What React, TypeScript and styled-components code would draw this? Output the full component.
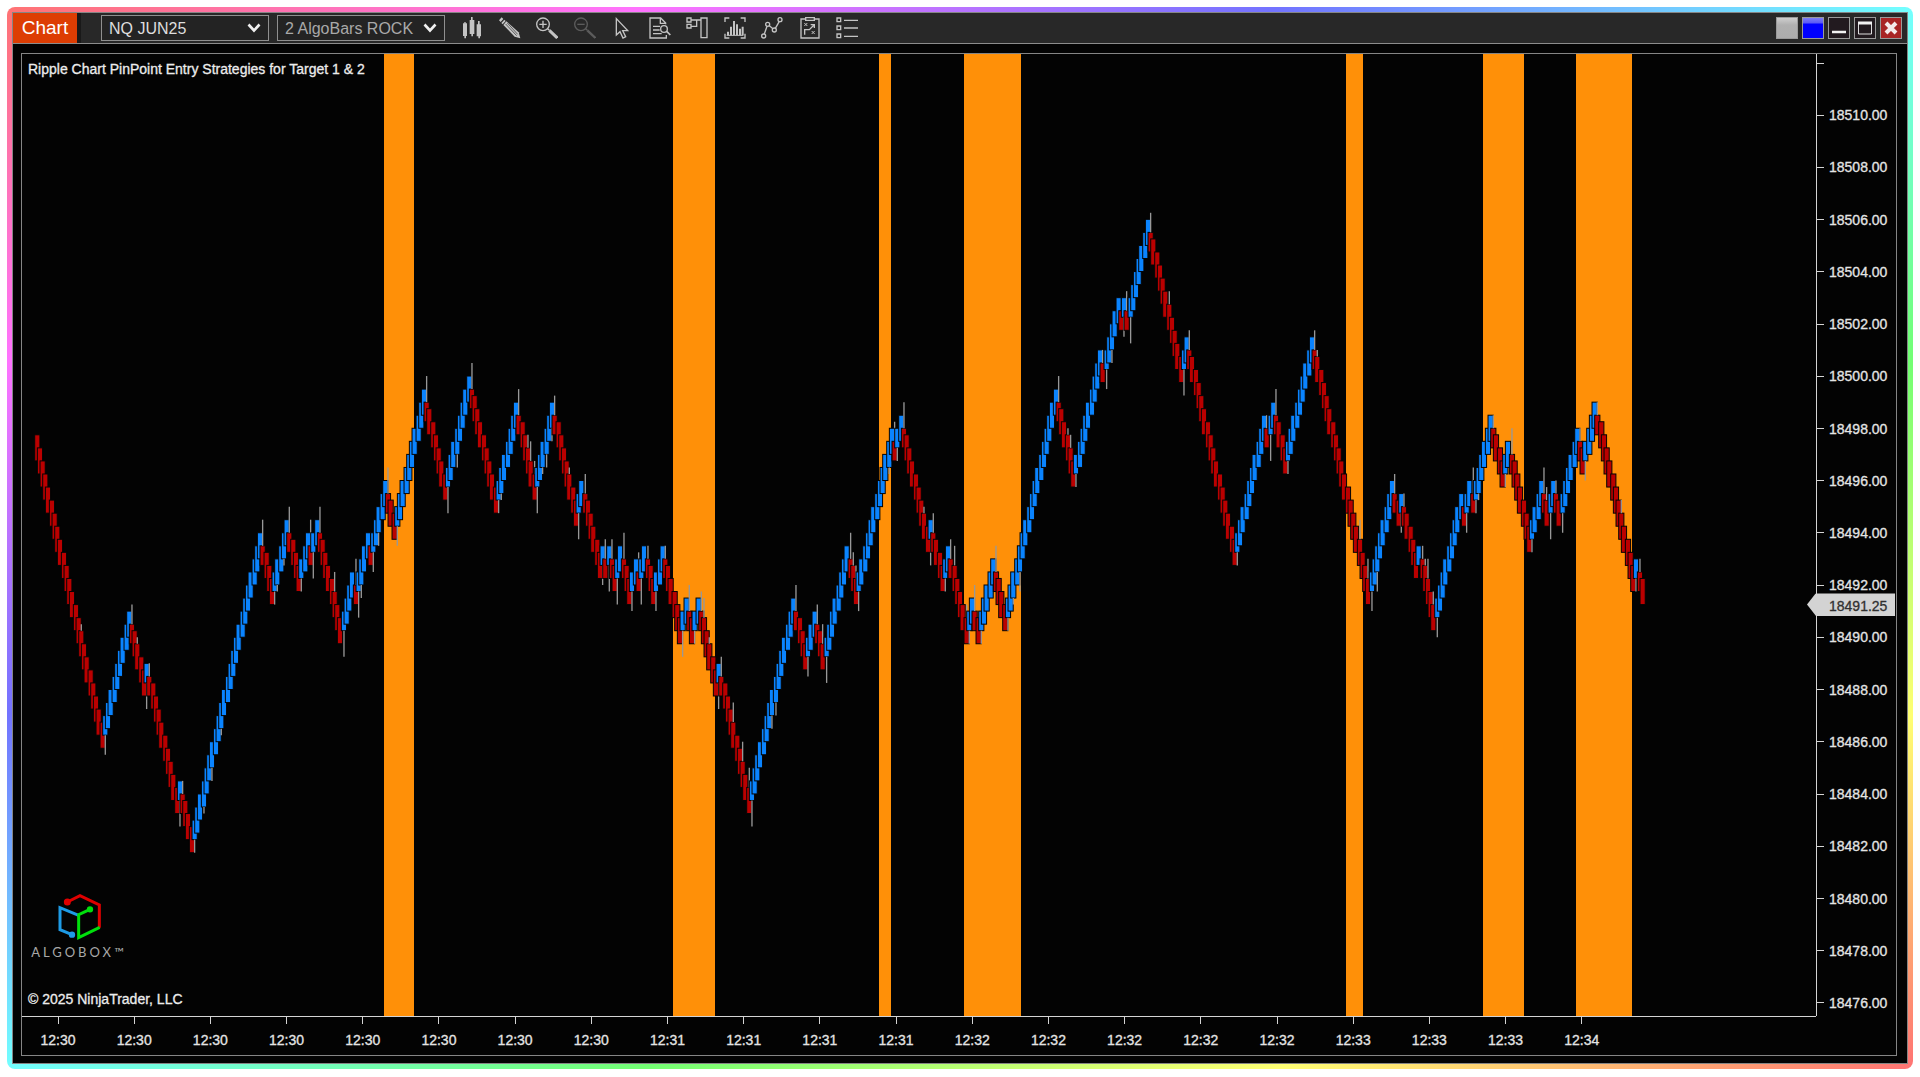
import React from "react";
import styled, { createGlobalStyle } from "styled-components";

const GlobalStyle = createGlobalStyle`
  * { box-sizing: border-box; }
  body {
    margin: 0;
    background: #fff;
    font-family: "Liberation Sans", Arial, sans-serif;
  }
`;

/* ---------- shell ---------- */

const Page = styled.div`
  height: 100vh;
  min-height: 480px;
  padding: 7px 7px 8px;
  display: flex;
`;

const GlowFrame = styled.div`
  flex: 1;
  display: flex;
  min-width: 0;
  padding: 5px;
  border-radius: 8px;
  background: linear-gradient(
    to bottom right,
    #ff7373,
    #ff73ff,
    #7373ff,
    #73ffff,
    #73ff73,
    #ffff73,
    #ff7373
  );
`;

const Window = styled.main`
  flex: 1;
  min-width: 0;
  display: flex;
  flex-direction: column;
  border: 1px solid #858585;
  background: #030303;
`;

/* ---------- title bar ---------- */

const TitleBar = styled.header`
  display: flex;
  align-items: center;
  height: 31px;
  padding-right: 5px;
  border-bottom: 1px solid #8c8c8c;
  background: #282828;
`;

const ChartTab = styled.button`
  width: 64px;
  height: 30px;
  padding: 0;
  border: 0;
  background: #dd3d03;
  color: #fff;
  font: 19px "Liberation Sans", Arial, sans-serif;
  box-shadow: 4px 0 0 #191919;
`;

const Selectors = styled.div`
  display: flex;
  gap: 8px;
  margin-left: 24px;
`;

const SelectBox = styled.label`
  display: grid;
  width: 168px;
  height: 26px;
  align-items: center;

  & > * {
    grid-area: 1 / 1;
  }

  & > svg {
    justify-self: end;
    margin-right: 8px;
    pointer-events: none;
  }
`;

const Select = styled.select<{ $tone: string }>`
  appearance: none;
  width: 100%;
  height: 26px;
  padding: 0 24px 0 7px;
  border: 1px solid #8f8f8f;
  border-radius: 0;
  background: #232323;
  color: ${(p) => p.$tone};
  font: 16px "Liberation Sans", Arial, sans-serif;
`;

const Tools = styled.nav`
  display: flex;
  justify-content: space-between;
  width: 397px;
  margin-left: 16px;
`;

const ToolButton = styled.button`
  width: 22px;
  height: 22px;
  padding: 0;
  border: 0;
  background: none;
  color: #c4c4c4;

  &:disabled {
    color: #5c5c5c;
  }

  svg {
    display: block;
  }
`;

const WindowControls = styled.div`
  display: flex;
  gap: 4px;
  margin-left: auto;
`;

const ControlButton = styled.button<{ $face: string }>`
  width: 22px;
  height: 22px;
  padding: 0;
  border: 1px solid #9a9a9a;
  background: ${(p) => p.$face};

  svg {
    display: block;
  }
`;

/* ---------- chart panel ---------- */

const PanelArea = styled.div`
  flex: 1;
  min-height: 0;
  display: flex;
  padding: 9px 10px 7px 8px;
`;

const Panel = styled.section`
  flex: 1;
  min-width: 0;
  display: grid;
  grid-template-columns: minmax(0, 1fr) 80px;
  grid-template-rows: minmax(0, 1fr) 39px;
  border: 1px solid #858585;
  -webkit-text-stroke: 0.3px currentColor;
`;

const Plot = styled.div`
  display: grid;
  min-height: 0;

  & > * {
    grid-area: 1 / 1;
    min-height: 0;
  }
`;

const Drawing = styled.svg`
  display: block;
  width: 100%;
  height: 100%;
`;

const Captions = styled.div`
  display: flex;
  flex-direction: column;
  justify-content: space-between;
  padding: 6px 6px 8px;
  color: #ececec;
  font-size: 14px;
  line-height: 18px;
`;

const Caption = styled.p`
  margin: 0;
`;

const Footer = styled.footer`
  display: flex;
  flex-direction: column;
  gap: 28px;
`;

const Brand = styled.div`
  display: flex;
  flex-direction: column;
  align-items: center;
  width: 102px;
  -webkit-text-stroke: 0;
`;

const BrandName = styled.span`
  display: flex;
  color: #a8a8a8;
  font: 13px/20px Lato, "Open Sans", sans-serif;
  letter-spacing: 3px;
  white-space: nowrap;
`;

const PriceAxis = styled.aside`
  position: relative;
  display: flex;
  flex-direction: column;
  justify-content: space-between;
  padding: 1px 0 5px;
  border-left: 1px solid #d4d4d4;
`;

const PriceRow = styled.div`
  display: flex;
  align-items: center;
  gap: 5px;
  height: 16px;
  color: #e4e4e4;
  font-size: 14px;
  line-height: 16px;

  &::before {
    content: "";
    width: 7px;
    height: 1px;
    background: #d4d4d4;
  }
`;

const PriceMarker = styled.output`
  position: absolute;
  left: -10px;
  right: 1px;
  height: 23px;
  padding-left: 22px;
  transform: translateY(-50%);
  clip-path: polygon(0 50%, 9px 0, 100% 0, 100% 100%, 9px 100%);
  background: #d3d3d3;
  color: #303030;
  font-size: 14px;
  line-height: 24px;
`;

const TimeAxis = styled.div`
  display: flex;
  justify-content: space-between;
  padding: 0 215px 0 17px;
  border-top: 1px solid #d4d4d4;
`;

const TimeLabel = styled.span`
  display: flex;
  flex-direction: column;
  align-items: center;
  gap: 7px;
  width: 38px;
  color: #e4e4e4;
  font-size: 14px;
  line-height: 18px;

  &::before {
    content: "";
    width: 1px;
    height: 7px;
    background: #d4d4d4;
  }
`;

/* ---------- icons ---------- */

const Chevron = () => (
  <svg width="14" height="12" viewBox="0 0 14 12" fill="none" stroke="#f0f0f0" strokeWidth="2.6" aria-hidden="true">
    <path d="M1.5 2.5 7 8.5l5.5-6" />
  </svg>
);

const Glyph = ({ children }: { children: React.ReactNode }) => (
  <svg width="22" height="22" viewBox="0 0 66 66" fill="none" stroke="currentColor" strokeWidth="4" aria-hidden="true">
    {children}
  </svg>
);

const tools: { label: string; disabled?: boolean; icon: React.ReactNode }[] = [
  {
    label: "Chart style",
    icon: (
      <g fill="currentColor" stroke="none">
        <path d="M6 19h4v-4h4v4h4v38h-3v7h-5v-7H6zM26 9h4V0h5v9h5v42h-4v7h-5v-7h-5zM47 22h4V12h5v10h4v36h-3v6h-5v-6h-5z" />
      </g>
    ),
  },
  {
    label: "Drawing tools",
    icon: (
      <g stroke="none" fill="currentColor">
        <path d="M8 1 0 10l5 5 8-9zM16 8 7 18l4 4 9-10z" />
        <path d="m22 13-9 11 34 35 17 5-5-18z" />
        <path d="m20 21 33 35M25 18l31 34" stroke="#282828" strokeWidth="2" />
      </g>
    ),
  },
  {
    label: "Zoom in",
    icon: (
      <>
        <circle cx="21" cy="22" r="19" />
        <path d="M21 11v22M10 22h22" />
        <path d="m35 35 5 5" />
        <path d="m40 40 24 23" strokeWidth="9" />
      </>
    ),
  },
  {
    label: "Zoom out",
    disabled: true,
    icon: (
      <>
        <circle cx="21" cy="22" r="19" />
        <path d="M10 22h22" />
        <path d="m35 35 5 5" />
        <path d="m40 40 24 23" strokeWidth="7" />
      </>
    ),
  },
  { label: "Cursor", icon: <path d="M16 5v49l11-10 9 19 8-4-9-18h15z" /> },
  {
    label: "Data box",
    icon: (
      <>
        <path d="M52 54v9H3V3h32l15 15v4M34 3v16h15" />
        <path d="M12 28h21M12 39h20M12 50h26" />
        <circle cx="45" cy="36" r="10" />
        <path d="m53 43 11 11" strokeWidth="5" />
      </>
    ),
  },
  {
    label: "Chart trader",
    icon: (
      <>
        <path d="M3 3h12v12H3zM3 22h12v11H3zM45 3h18v59H45zM16 9h28M16 28h16V10" />
      </>
    ),
  },
  {
    label: "Indicators",
    icon: (
      <>
        <path d="M3 15V3h13M50 3h13v12M3 50v13h13M50 63h13V50" />
        <path d="M12 55V44M21 55V29M30 55V12M39 55V22M48 55V35M56 55V29" strokeWidth="6" />
        <path d="M8 55h50" strokeWidth="3" />
      </>
    ),
  },
  {
    label: "Strategies",
    icon: (
      <>
        <circle cx="8" cy="57" r="6" />
        <circle cx="20" cy="22" r="6" />
        <circle cx="40" cy="39" r="6" />
        <circle cx="57" cy="8" r="6" />
        <path d="m10 51 8-23M25 26l11 9M43 34l12-21" />
      </>
    ),
  },
  {
    label: "Strategy analyzer",
    icon: (
      <>
        <path d="M20 6H6v57h54V6H46" />
        <path d="M20 2h26v8H20z" />
        <path d="M17 53V38h14l14-14M35 23h11v10" />
        <path d="m16 18 9 9m0-9-9 9M38 42l9 9m0-9-9 9" strokeWidth="3" />
      </>
    ),
  },
  {
    label: "Properties",
    icon: (
      <path d="M3 3h11v11H3zM3 27h11v11H3zM3 51h11v11H3zM24 10h42M24 33h42M24 58h42" />
    ),
  },
];

const Cube = () => (
  <svg width="46" height="50" viewBox="0 0 138 150" fill="none" strokeWidth="9" role="img" aria-label="AlgoBox">
    <g stroke="#e00000">
      <path d="m34 30 38-19 58 28v68" />
      <circle cx="34" cy="30" r="6" fill="#e00000" />
    </g>
    <g stroke="#1e9be6">
      <path d="m48 128-36-15V47l56 23" />
      <circle cx="48" cy="128" r="5" fill="#1e9be6" />
    </g>
    <g stroke="#00df0c">
      <path d="m102 52-34 16v69l63-31" />
      <circle cx="102" cy="52" r="5" fill="#00df0c" />
    </g>
  </svg>
);

/* ---------- price data ---------- */

const PLOT_W = 1794;
const PLOT_H = 962;
const UNIT = 4 / 3;
const TICK = 6.53;
const ORIGIN_X = 15.3;
const ORIGIN_Y = 380.8;

/* Session highs and lows in ticks below the opening price, paired with the wick reach at each turn. */
const turns: [number, number | null][] = [
  [48, 49], [27, 26], [40, 42], [35, 35], [58, 60], [53, 53], [64, 64], [15, 13],
  [26, 26], [13, 11], [24, 24], [15, 13], [20, 22], [13, 11], [32, 34], [21, 19],
  [26, 28], [15, null], [20, 21], [7, 5], [16, 17], [-7, -9], [10, 12], [-9, -11],
  [12, 12], [-5, -7], [10, 12], [-5, -6], [14, 16], [7, 6], [22, 23], [17, 16],
  [22, 24], [17, 16], [24, 26], [17, 15], [26, 27], [19, 18], [24, 26], [17, 17],
  [26, 27], [17, 17], [32, 34], [25, 23], [32, 32], [25, 24], [40, 42], [35, 34],
  [58, 60], [25, 23], [36, 37], [27, 26], [36, 38], [17, 15], [26, 27], [-1, -2],
  [4, 4], [-3, -5], [18, 20], [13, 12], [24, 24], [17, 16], [32, 32], [25, 23],
  [32, 32], [19, 17], [30, 30], [-7, -9], [8, 8], [-13, -13], [-8, -7], [-21, null],
  [-16, -15], [-21, -22], [-16, -14], [-33, -34], [-8, -6], [-15, -16], [20, 20], [-3, -3],
  [2, 4], [-5, -7], [6, 6], [-15, -16], [26, 27], [7, 6], [14, 15], [9, 9],
  [22, null], [17, 17], [30, 31], [9, null], [14, 15], [7, 5], [12, 12], [-3, -3],
  [8, 8], [1, -1], [18, 18], [7, 5], [14, 16], [7, 7], [14, 15], [-1, -1],
  [6, 7], [-5, -5], [24, 24], [19, 19], [26, null],
];

/* Wicks on bars in the middle of a run: horizontal place and reach in ticks. */
const midWicks: [number, number][] = [
  [60, 29], [116, 31], [199, 46], [190, 53], [182, 58], [262, 20], [256, 24], [312, 21],
  [339, 25], [358, 17], [434, 5], [478, 10], [505, 0], [509, 1], [512, 4], [521, 6],
  [524, 5], [529, 1], [547, 5], [681, 25], [688, 31], [711, 41], [720, 47], [727, 51],
  [752, 43], [750, 45], [830, 18], [833, 20], [801, 29], [866, 6], [901, 11], [932, 17],
  [943, 26], [991, 26], [997, 24], [1045, -1], [1048, 0], [1090, -11], [1146, -22], [1297, -13],
  [1336, 13], [1339, 17], [1346, 19], [1354, 24], [1351, 24], [1402, 19], [1405, 19], [1411, 24],
  [1453, 12], [1456, 10], [1524, 8], [1598, 10],
];

const bands: [number, number][] = [
  [362, 392], [651, 693], [857, 869], [942, 999], [1324, 1341], [1461, 1502], [1554, 1610],
];

type Bar = { x: number; high: number; low: number; up: boolean; wick: number | null };

function buildBars(): Bar[] {
  const bars: Bar[] = [];
  let close = 2;
  turns.forEach(([target], run) => {
    const up = run % 2 === 1;
    const dir = up ? -1 : 1;
    let next = run === 0 ? 4 : close + 5 * dir;
    let body = run === 0 ? 4 : 3;
    let wick = run === 0 ? null : turns[run - 1][1];
    while ((target - next) * dir >= 0) {
      const open = next - body * dir;
      bars.push({
        x: ORIGIN_X + Math.floor(bars.length * 2.2345) * UNIT,
        high: Math.min(open, next),
        low: Math.max(open, next),
        up,
        wick,
      });
      close = next;
      next += 2 * dir;
      body = 4;
      wick = null;
    }
  });
  midWicks.forEach(([x, reach]) => {
    const nearest = bars.reduce((a, b) => (Math.abs(b.x - x) < Math.abs(a.x - x) ? b : a));
    if (nearest.wick === null) nearest.wick = reach;
  });
  return bars;
}

const bars = buildBars();
const toY = (tick: number) => ORIGIN_Y + tick * TICK;

const Candle = ({ bar }: { bar: Bar }) => {
  const { x, high, low, up, wick } = bar;
  const from = wick !== null && wick < high ? high : low;
  return (
    <g>
      <rect
        x={x - 2.6}
        y={toY(high)}
        width={5.2}
        height={toY(low) - toY(high)}
        fill={up ? "#0a84ff" : "#bb0000"}
        stroke="#050505"
        strokeWidth={1}
      />
      {wick !== null && (wick < high || wick > low) && (
        <path d={`M${x} ${toY(from)}V${toY(wick)}`} stroke="#989898" strokeWidth={UNIT} />
      )}
    </g>
  );
};

const prices = Array.from({ length: 18 }, (_, i) => (18510 - i * 2).toFixed(2));
const times = [
  ...Array(8).fill("12:30"),
  ...Array(4).fill("12:31"),
  ...Array(5).fill("12:32"),
  ...Array(3).fill("12:33"),
  "12:34",
];
const lastPrice = 18491.25;
const markerTop = (toY((18497.75 - lastPrice) * 4) / PLOT_H) * 100;

export default function App() {
  return (
    <Page>
      <GlobalStyle />
      <GlowFrame>
        <Window>
          <TitleBar>
            <ChartTab type="button">Chart</ChartTab>
            <Selectors>
              <SelectBox>
                <Select $tone="#dedede" aria-label="Instrument" defaultValue="NQ JUN25">
                  <option>NQ JUN25</option>
                </Select>
                <Chevron />
              </SelectBox>
              <SelectBox>
                <Select $tone="#a9a9a9" aria-label="Bar type" defaultValue="2 AlgoBars ROCK">
                  <option>2 AlgoBars ROCK</option>
                </Select>
                <Chevron />
              </SelectBox>
            </Selectors>
            <Tools aria-label="Chart tools">
              {tools.map((t) => (
                <ToolButton key={t.label} type="button" aria-label={t.label} disabled={t.disabled}>
                  <Glyph>{t.icon}</Glyph>
                </ToolButton>
              ))}
            </Tools>
            <WindowControls>
              <ControlButton type="button" aria-label="Instrument link" $face="linear-gradient(#cfcfcf, #b0b0b0 35%, #adadad)" />
              <ControlButton type="button" aria-label="Interval link" $face="linear-gradient(#7d7df5, #5a5af5 25%, #0000ff 30%)" />
              <ControlButton type="button" aria-label="Minimize" $face="#221a1f">
                <svg width="20" height="20" viewBox="0 0 20 20" aria-hidden="true">
                  <path d="M3 14h14" stroke="#f2f2f2" strokeWidth="2.500" />
                </svg>
              </ControlButton>
              <ControlButton type="button" aria-label="Maximize" $face="#221a1f">
                <svg width="20" height="20" viewBox="0 0 20 20" fill="none" stroke="#dedede" aria-hidden="true">
                  <path d="M3.500 4v12h13V4" />
                  <path d="M3 5h14" stroke="#f2f2f2" strokeWidth="3" />
                </svg>
              </ControlButton>
              <ControlButton type="button" aria-label="Close" $face="#a82424">
                <svg width="20" height="20" viewBox="0 0 20 20" aria-hidden="true">
                  <path d="m5 5 10 10M15 5 5 15" stroke="#f4eaea" strokeWidth="4" />
                </svg>
              </ControlButton>
            </WindowControls>
          </TitleBar>
          <PanelArea>
            <Panel>
              <Plot>
                <Drawing viewBox={`0 0 ${PLOT_W} ${PLOT_H}`} preserveAspectRatio="none" role="img" aria-label="NQ JUN25 price bars">
                  {bands.map(([from, to]) => (
                    <rect key={from} x={from} y={0} width={to - from} height={PLOT_H} fill="#ff9008" />
                  ))}
                  {bars.map((bar, i) => (
                    <Candle key={i} bar={bar} />
                  ))}
                </Drawing>
                <Captions>
                  <Caption>Ripple Chart PinPoint Entry Strategies for Target 1 &amp; 2</Caption>
                  <Footer>
                    <Brand>
                      <Cube />
                      <BrandName>ALGOBOX™</BrandName>
                    </Brand>
                    <Caption>© 2025 NinjaTrader, LLC</Caption>
                  </Footer>
                </Captions>
              </Plot>
              <PriceAxis>
                <PriceRow />
                {prices.map((p) => (
                  <PriceRow key={p}>{p}</PriceRow>
                ))}
                <PriceMarker style={{ top: `${markerTop}%` }}>{lastPrice.toFixed(2)}</PriceMarker>
              </PriceAxis>
              <TimeAxis>
                {times.map((t, i) => (
                  <TimeLabel key={i}>{t}</TimeLabel>
                ))}
              </TimeAxis>
            </Panel>
          </PanelArea>
        </Window>
      </GlowFrame>
    </Page>
  );
}
